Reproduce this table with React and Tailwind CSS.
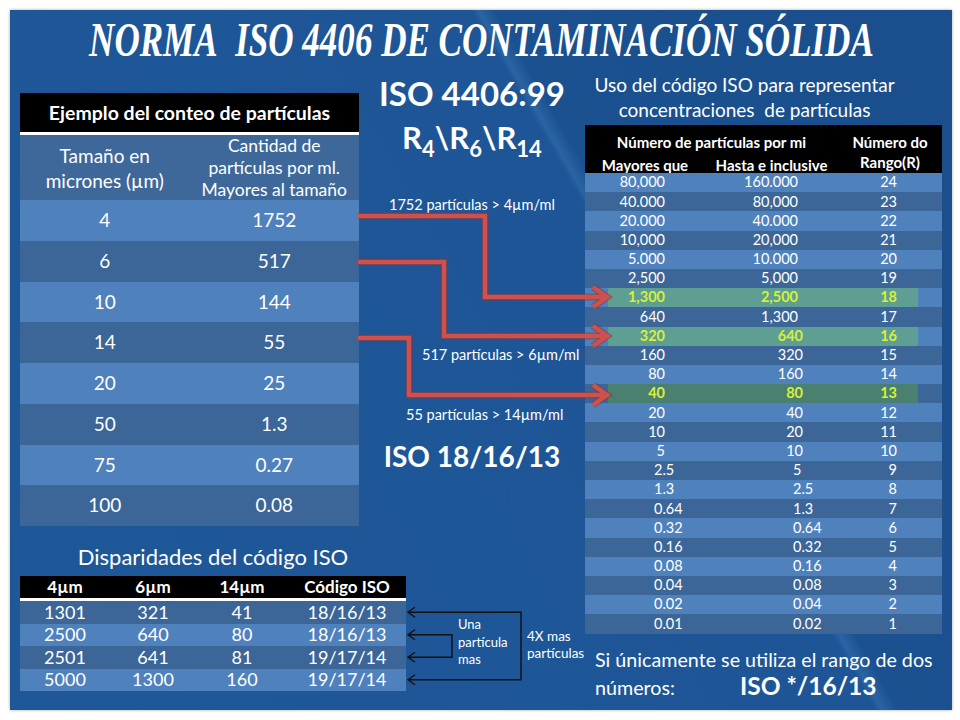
import React from "react";

const sizes = [
  ["4", "1752"],
  ["6", "517"],
  ["10", "144"],
  ["14", "55"],
  ["20", "25"],
  ["50", "1.3"],
  ["75", "0.27"],
  ["100", "0.08"],
];

// [mayores que, hasta e inclusive, rango, resaltado]
const ranges = [
  ["80,000", "160.000", "24"],
  ["40.000", "80,000", "23"],
  ["20.000", "40.000", "22"],
  ["10,000", "20,000", "21"],
  ["5.000", "10.000", "20"],
  ["2,500", "5,000", "19"],
  ["1,300", "2,500", "18", true],
  ["640", "1,300", "17"],
  ["320", "640", "16", true],
  ["160", "320", "15"],
  ["80", "160", "14"],
  ["40", "80", "13", true],
  ["20", "40", "12"],
  ["10", "20", "11"],
  ["5", "10", "10"],
  ["2.5", "5", "9"],
  ["1.3", "2.5", "8"],
  ["0.64", "1.3", "7"],
  ["0.32", "0.64", "6"],
  ["0.16", "0.32", "5"],
  ["0.08", "0.16", "4"],
  ["0.04", "0.08", "3"],
  ["0.02", "0.04", "2"],
  ["0.01", "0.02", "1"],
];

const disparities = [
  ["1301", "321", "41", "18/16/13"],
  ["2500", "640", "80", "18/16/13"],
  ["2501", "641", "81", "19/17/14"],
  ["5000", "1300", "160", "19/17/14"],
];

function rowBg(i, hl) {
  if (hl) {
    return i % 2 === 0
      ? "bg-[linear-gradient(to_right,#4f81bd_23px,#5f9e92_23px,#5f9e92_333px,#4f81bd_333px)]"
      : "bg-[linear-gradient(to_right,#3c6698_23px,#4a806f_23px,#4a806f_333px,#3c6698_333px)]";
  }
  return i % 2 === 0 ? "bg-[#4f81bd]" : "bg-[#3c6698]";
}

const LeftTable = () => (
  <div className="w-[339px] mt-[17px] shrink-0">
    <div className="h-[42px] bg-black border-b-[3px] border-white flex items-center justify-center text-[19.5px] font-bold whitespace-nowrap">
      Ejemplo del conteo de partículas
    </div>
    <div className="h-[65px] bg-[#3e6899] flex items-center whitespace-nowrap">
      <div className="w-1/2 text-center text-[19px] leading-[25px]">
        Tamaño en
        <br />
        micrones (µm)
      </div>
      <div className="w-1/2 text-center text-[17.5px] leading-[22px]">
        Cantidad de
        <br />
        partículas por ml.
        <br />
        Mayores al tamaño
      </div>
    </div>
    {sizes.map((r, i) => (
      <div
        key={r[0]}
        className={`h-[40.75px] flex items-center text-[19px] ${
          i % 2 === 0 ? "bg-[#4f81bd]" : "bg-[#3c6698]"
        }`}
      >
        <div className="w-1/2 text-center">{r[0]}</div>
        <div className="w-1/2 text-center">{r[1]}</div>
      </div>
    ))}
  </div>
);

const Middle = () => (
  <div className="w-[226px] shrink-0 flex flex-col">
    <div className="text-center text-[33px] font-bold leading-[36px] -mt-[1px]">
      ISO 4406:99
    </div>
    <div className="text-center text-[31px] font-bold leading-[40px] mt-[6px]">
      R<span className="relative top-[8px] text-[22px]">4</span>\R
      <span className="relative top-[8px] text-[22px]">6</span>\R
      <span className="relative top-[8px] text-[22px]">14</span>
    </div>
    <div className="text-center text-[14.5px] leading-[20px] mt-[34px] whitespace-nowrap">
      1752 partículas &gt; 4µm/ml
    </div>
    <div className="pl-[63px] text-[14.5px] leading-[20px] mt-[130px] whitespace-nowrap">
      517 partículas &gt; 6µm/ml
    </div>
    <div className="pl-[47px] text-[14.5px] leading-[20px] mt-[40px] whitespace-nowrap">
      55 partículas &gt; 14µm/ml
    </div>
    <div className="text-center text-[28px] font-bold leading-[34px] mt-[14px]">
      ISO 18/16/13
    </div>
  </div>
);

const Disparities = () => (
  <div className="flex mt-[18px]">
    <div className="w-[386px] shrink-0">
      <div className="text-center text-[22px] leading-[26px] whitespace-nowrap">
        Disparidades del código ISO
      </div>
      <div className="mt-[6px] h-[25px] bg-black border-b-[3px] border-white flex items-center text-[17px] font-bold">
        <div className="w-[90px] text-center">4µm</div>
        <div className="w-[86px] text-center">6µm</div>
        <div className="w-[92px] text-center">14µm</div>
        <div className="w-[118px] text-center">Código ISO</div>
      </div>
      {disparities.map((r, i) => (
        <div
          key={r[0]}
          className={`h-[22.5px] flex items-center text-[18px] ${
            i % 2 === 0 ? "bg-[#3c6698]" : "bg-[#4f81bd]"
          }`}
        >
          <div className="w-[90px] text-center">{r[0]}</div>
          <div className="w-[86px] text-center">{r[1]}</div>
          <div className="w-[92px] text-center">{r[2]}</div>
          <div className="w-[118px] text-center">{r[3]}</div>
        </div>
      ))}
    </div>
    <div className="w-[60px] ml-[52px] mt-[72px] text-[13px] leading-[17.5px] shrink-0">
      Una
      <br />
      partícula
      <br />
      mas
    </div>
    <div className="ml-[9px] mt-[84px] text-[13.5px] leading-[17px] shrink-0 whitespace-nowrap">
      4X mas
      <br />
      partículas
    </div>
  </div>
);

const RightColumn = () => (
  <div className="w-[357px] shrink-0 flex flex-col">
    <div className="-mt-[4px] pr-[38px] text-center text-[19px] leading-[25px] whitespace-pre-line">
      {"Uso del código ISO para representar\nconcentraciones\u00a0 de partículas"}
    </div>
    <div className="mt-[3px] h-[48px] bg-black flex text-[15px] font-bold leading-[16px] whitespace-nowrap">
      <div className="w-[253px] pt-[9px] flex flex-col">
        <div className="text-center">Número de partículas por mi</div>
        <div className="flex mt-[7px]">
          <div className="w-[120px] text-center">Mayores que</div>
          <div className="w-[133px] text-center">Hasta e inclusive</div>
        </div>
      </div>
      <div className="w-[104px] pt-[9px] text-center">
        <div>Número do</div>
        <div className="mt-[4px]">Rango(R)</div>
      </div>
    </div>
    {ranges.map((r, i) => (
      <div
        key={r[2]}
        className={`h-[19.2px] flex items-center text-[14.5px] leading-none whitespace-nowrap ${rowBg(
          i,
          r[3]
        )} ${r[3] ? "font-bold text-[#d6f03c]" : ""}`}
      >
        <div className={i < 15 ? "w-[80px] shrink-0 text-right" : "w-[80px] shrink-0 pl-[69px]"}>
          {r[0]}
        </div>
        <div
          className={
            i < 8
              ? "w-[138px] shrink-0 text-right pr-[5px]"
              : i < 15
              ? "w-[138px] shrink-0 text-right"
              : "w-[138px] shrink-0 pl-[128px]"
          }
        >
          {r[1]}
        </div>
        <div className="w-[94px] shrink-0 text-right">{r[2]}</div>
      </div>
    ))}
    <div className="mt-[13px] pl-[10px] text-[19.7px] leading-[26px] whitespace-nowrap">
      <div>Si únicamente se utiliza el rango de dos</div>
      <div className="flex items-baseline">
        <span className="w-[145px]">números:</span>
        <span className="text-[24.5px] font-bold">ISO */16/13</span>
      </div>
    </div>
  </div>
);

const Arrows = () => {
  const red = [
    "M358 216 H485 V297 H605",
    "M358 262 H444 V336 H605",
    "M358 338 H409 V395 H605",
  ];
  const heads = [297, 336, 395];
  const rows = [612.25, 634.75, 657.25, 679.75];
  return (
    <svg
      className="absolute inset-0 pointer-events-none"
      width="960"
      height="720"
      viewBox="0 0 960 720"
    >
      <g fill="none" strokeLinejoin="miter">
        {red.map((d) => (
          <path key={d} d={d} stroke="#8f3330" strokeOpacity="0.55" strokeWidth="7" />
        ))}
        {heads.map((y) => (
          <path
            key={y}
            d={`M593 ${y - 10} L607 ${y} L593 ${y + 10}`}
            stroke="#8f3330"
            strokeOpacity="0.55"
            strokeWidth="7"
          />
        ))}
        {red.map((d) => (
          <path key={d} d={d} stroke="#cf514d" strokeWidth="4.5" />
        ))}
        {heads.map((y) => (
          <path
            key={y}
            d={`M593 ${y - 10} L607 ${y} L593 ${y + 10}`}
            stroke="#cf514d"
            strokeWidth="4.5"
          />
        ))}
      </g>
      <g fill="none" stroke="#111" strokeWidth="1.4">
        {rows.map((y) => (
          <path key={y} d={`M415 ${y - 5} L408 ${y} L415 ${y + 5}`} />
        ))}
        <path d={`M408 ${rows[0]} H521 V${rows[3]} H408`} />
        <path d={`M408 ${rows[1]} H452 V${rows[2]} H408`} />
      </g>
    </svg>
  );
};

export default function App() {
  return (
    <div className="relative w-[960px] h-[720px] bg-white pt-[10px] pl-[10px] font-['Lato',sans-serif] text-white overflow-hidden">
      <div className="w-[942px] h-[700px] flex flex-col shadow-[0_0_3px_rgba(0,0,0,0.35)] bg-[linear-gradient(60deg,#1f5898_0%,#1d5596_64.3%,#2a64a4_64.8%,#1b5190_66%,#1a4e8c_100%)]">
        <div className="h-[66px] flex items-center justify-center pb-[6px]">
          <h1 className="inline-block scale-x-[0.73] font-['Liberation_Serif',serif] italic font-bold text-[48px] leading-none whitespace-nowrap">
            NORMA&nbsp; ISO 4406 DE CONTAMINACIÓN SÓLIDA
          </h1>
        </div>
        <div className="flex pl-[10px]">
          <div className="w-[565px] shrink-0 flex flex-col">
            <div className="flex">
              <LeftTable />
              <Middle />
            </div>
            <Disparities />
          </div>
          <RightColumn />
        </div>
      </div>
      <Arrows />
    </div>
  );
}
